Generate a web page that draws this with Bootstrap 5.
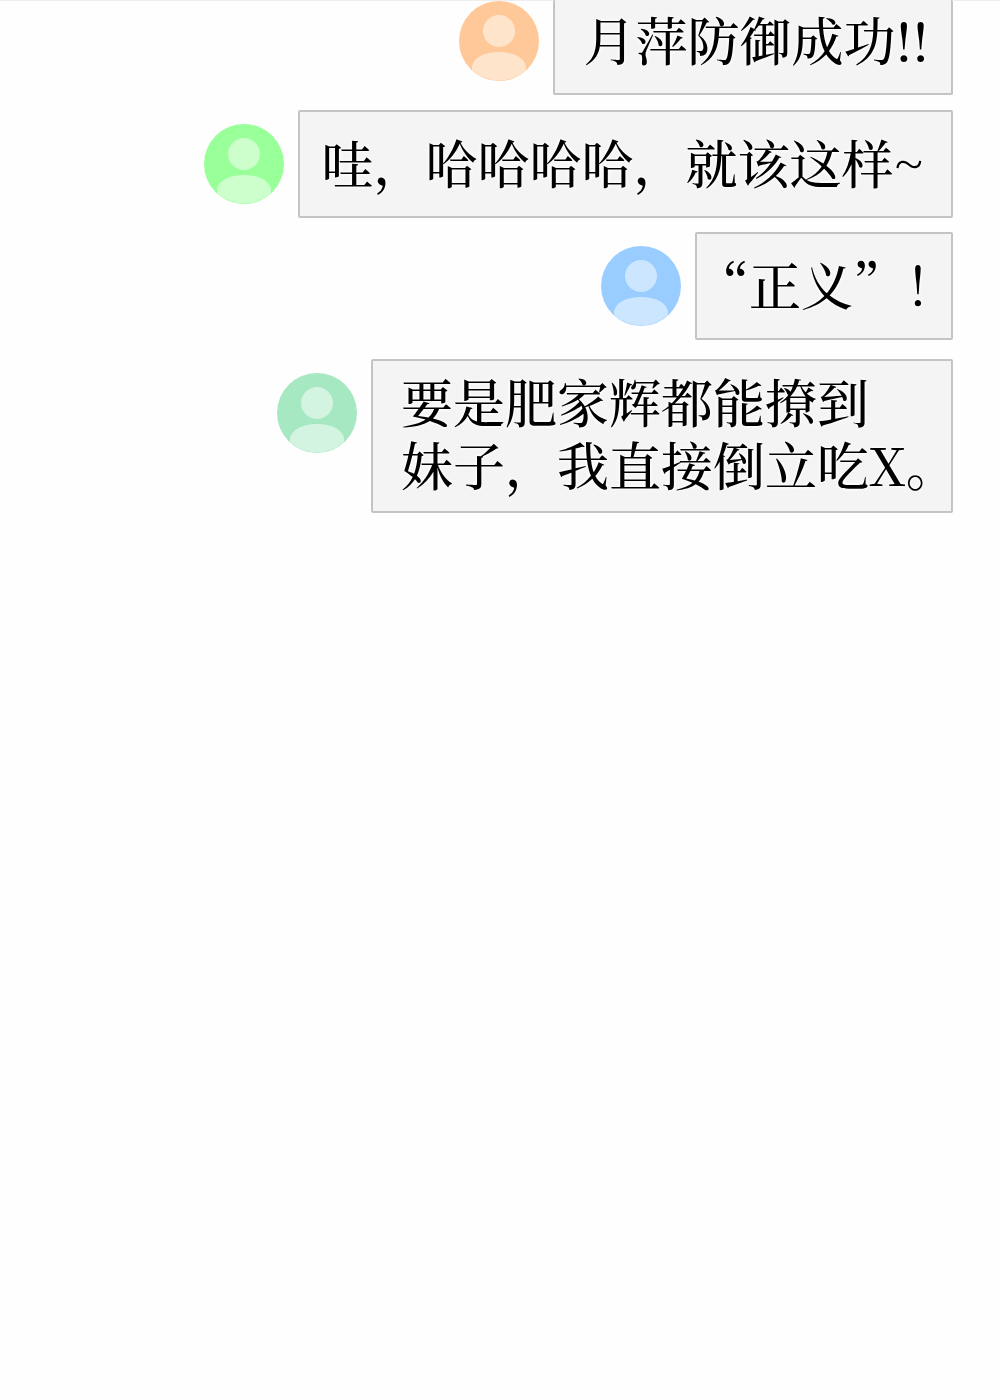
<!DOCTYPE html>
<html lang="zh-CN">
<head>
<meta charset="utf-8">
<meta name="viewport" content="width=device-width, initial-scale=1">
<title>聊天</title>
<link href="https://cdn.jsdelivr.net/npm/bootstrap@5.3.0/dist/css/bootstrap.min.css" rel="stylesheet">
<style>
body{background:#fefefe;color:#000;font-family:"Noto Serif CJK SC","Noto Sans CJK SC",serif}
.chat{padding:0 47px 48px;box-shadow:inset 0 1px #eee}
.message{gap:14px;margin-bottom:15px}
.avatar{width:80px;height:80px;flex:none;margin-top:14px}
.bubble{background:#f4f4f4;border:2px solid #c4c4c4;border-radius:2px;font-size:52px;font-weight:500;line-height:62px;padding:19px 26px 23px;white-space:nowrap;text-spacing-trim:space-all;text-shadow:0 0 3px #fff,0 0 3px #fff,0 0 4px #fff}
.peach{color:#ffc899}.lime{color:#99ff99}.sky{color:#99ccff}.mint{color:#a6e8c1}
.peach.avatar{margin-top:1px}
.first{border-top:0;padding:8px 22px 23px 29px}
.wide{padding-left:21px;padding-right:27px}
.message.close-up{margin-bottom:14px}
.short{padding-left:0;padding-right:0;width:258px}
.tall{padding:8px 0 16px 28px;width:582px;line-height:63px}
.message.spaced{margin-bottom:19px}
</style>
</head>
<body>
<svg class="d-none" xmlns="http://www.w3.org/2000/svg"><symbol id="person" viewBox="0 0 80 80"><circle cx="40" cy="40" r="40" fill="currentColor"/><g fill="#fff" fill-opacity=".5"><circle cx="40" cy="30" r="16"/><path d="M13 69V66C14 56 27 51 40 51S66 56 67 66V69A40 40 0 0 1 13 69Z"/></g></symbol></svg>
<main class="chat">
<div class="message d-flex justify-content-end"><svg class="avatar peach" role="img" aria-label="头像"><use href="#person"/></svg><div class="bubble first">月萍防御成功!!</div></div>
<div class="message close-up d-flex justify-content-end"><svg class="avatar lime" role="img" aria-label="头像"><use href="#person"/></svg><div class="bubble wide">哇，哈哈哈哈，就该这样~</div></div>
<div class="message spaced d-flex justify-content-end"><svg class="avatar sky" role="img" aria-label="头像"><use href="#person"/></svg><div class="bubble short">“正义”！</div></div>
<div class="message d-flex justify-content-end"><svg class="avatar mint" role="img" aria-label="头像"><use href="#person"/></svg><div class="bubble tall">要是肥家辉都能撩到<br>妹子，我直接倒立吃X。</div></div>
</main>
<script src="https://cdn.jsdelivr.net/npm/bootstrap@5.3.0/dist/js/bootstrap.bundle.min.js"></script>
</body>
</html>
